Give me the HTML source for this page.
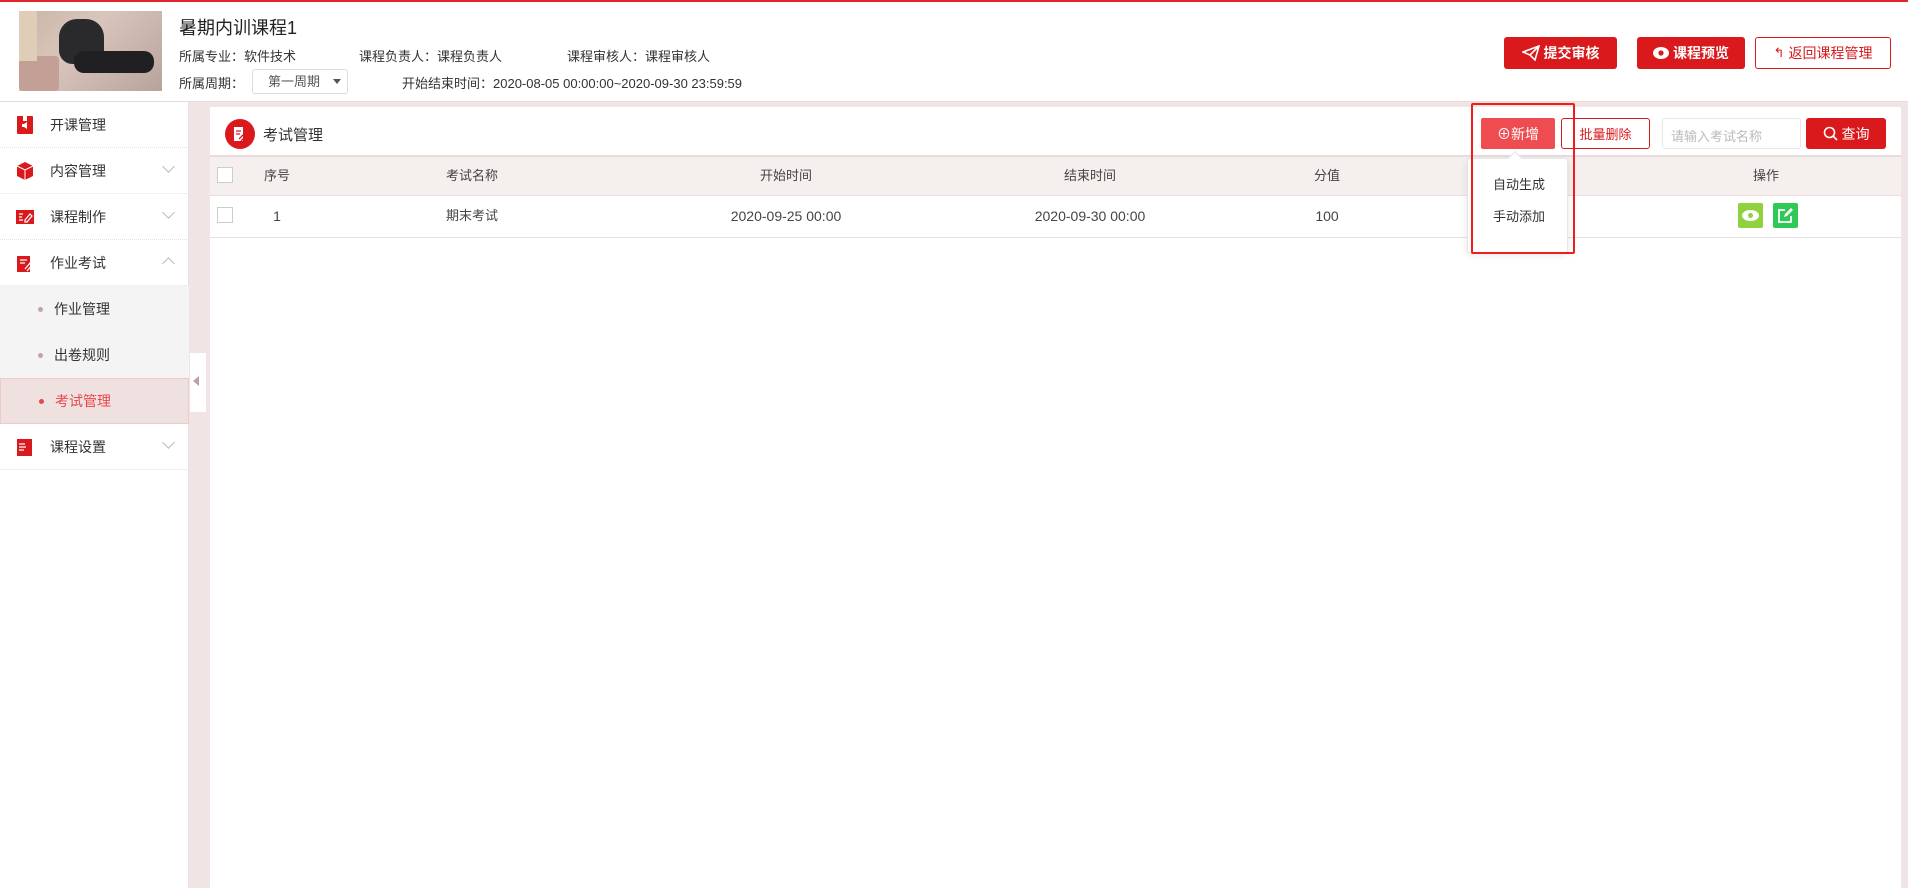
<!DOCTYPE html>
<html><head><meta charset="utf-8">
<style>
*{box-sizing:border-box;margin:0;padding:0}
body{width:1908px;height:888px;overflow:hidden;background:#f0e4e5;font-family:"Liberation Sans","Noto Sans CJK SC",sans-serif;color:#333;position:relative}
.a{position:absolute}
.hdr{left:0;top:0;width:1908px;height:102px;background:#fff;border-top:2px solid #e0262a;border-bottom:1px solid #ead9da}
.btn{position:absolute;height:32px;border-radius:3px;font-size:14px;display:flex;align-items:center;justify-content:center;gap:4px}
.red{background:#d9191c;color:#fff;font-weight:bold}
.side{left:0;top:102px;width:189px;height:786px;background:#fff;border-right:1px solid #eadede}
.it{position:absolute;left:0;width:189px;height:46px;font-size:14px;display:flex;align-items:center;border-bottom:1px dotted #e8e0e0}
.it .ic{position:absolute;left:16px;width:18px;height:18px}
.it span{position:absolute;left:50px}
.chev{position:absolute;left:164px;width:9px;height:9px;border-right:1.3px solid #bbb;border-bottom:1.3px solid #bbb;transform:rotate(45deg);top:14px}
.sub{background:#f4f4f4}
.sub span{left:54px}
.dot{position:absolute;left:38px;width:5px;height:5px;border-radius:50%;background:#c0a6a8}
.panel{left:210px;top:107px;width:1691px;height:781px;background:#fff}
.th{position:absolute;font-size:13px;color:#444;transform:translateX(-50%);line-height:16px;white-space:nowrap}
.cb{position:absolute;width:16px;height:16px;border:1px solid #ccc;background:#fff}
</style></head><body>
<div class="a hdr">
  <div class="a" style="left:19px;top:9px;width:143px;height:80px;background:linear-gradient(135deg,#cbb4a8 0%,#d9c5bb 40%,#b8a39a 100%);overflow:hidden">
    <div class="a" style="left:40px;top:8px;width:45px;height:45px;background:#2a2a2c;border-radius:40% 40% 30% 30%"></div>
    <div class="a" style="left:55px;top:40px;width:80px;height:22px;background:#202022;border-radius:10px"></div>
    <div class="a" style="left:0;top:45px;width:40px;height:35px;background:#c39f96;border-radius:4px"></div>
    <div class="a" style="left:0;top:0;width:18px;height:50px;background:#e0cdb8"></div>
  </div>
  <div class="a" style="left:179px;top:12px;font-size:18px;color:#222">暑期内训课程1</div>
  <div class="a" style="left:179px;top:44px;font-size:13px;color:#333">所属专业：软件技术</div>
  <div class="a" style="left:359px;top:44px;font-size:13px;color:#333">课程负责人：课程负责人</div>
  <div class="a" style="left:567px;top:44px;font-size:13px;color:#333">课程审核人：课程审核人</div>
  <div class="a" style="left:179px;top:71px;font-size:13px;color:#333">所属周期：</div>
  <div class="a" style="left:252px;top:67px;width:96px;height:25px;border:1px solid #ddd;border-radius:3px;font-size:13px;line-height:23px;color:#555;padding-left:15px">第一周期<span class="a" style="left:80px;top:9px;border:4px solid transparent;border-top:5px solid #555"></span></div>
  <div class="a" style="left:402px;top:71px;font-size:13px;color:#333">开始结束时间：2020-08-05 00:00:00~2020-09-30 23:59:59</div>
  <div class="btn red" style="left:1504px;top:35px;width:113px"><svg width="18" height="16" viewBox="0 0 18 16"><path d="M1 7L17 1 13 15 8 10 1 7ZM8 10L17 1" fill="none" stroke="#fff" stroke-width="1.6"/></svg>提交审核</div>
  <div class="btn red" style="left:1637px;top:35px;width:108px"><svg width="16" height="12" viewBox="0 0 16 12"><ellipse cx="8" cy="6" rx="8" ry="6" fill="#fff"/><circle cx="8" cy="6" r="2.6" fill="#d9191c"/></svg>课程预览</div>
  <div class="btn" style="left:1755px;top:35px;width:136px;border:1px solid #d9191c;color:#d9191c"><span style="font-size:13px">↰</span>返回课程管理</div>
</div>

<div class="a side">
  <div class="it" style="top:0"><svg class="ic" viewBox="0 0 18 18"><rect x="1" y="0" width="16" height="18" rx="1" fill="#d9191c"/><rect x="7" y="0" width="4" height="5" fill="#fff"/><path d="M6 8h2l3-2v7l-3-2H6z" fill="#fff"/></svg><span>开课管理</span></div>
  <div class="it" style="top:46px"><svg class="ic" viewBox="0 0 18 18"><path d="M9 0L17 4V14L9 18 1 14V4Z" fill="#d9191c"/><path d="M1 4L9 8 17 4M9 8V18" stroke="#fff" stroke-width="1" fill="none"/></svg><span>内容管理</span><i class="chev"></i></div>
  <div class="it" style="top:92px"><svg class="ic" viewBox="0 0 18 18"><rect x="0" y="2" width="18" height="14" fill="#d9191c"/><path d="M3 6h4M3 9h3M3 12h4M9 12l5-6 2 2-5 6h-2z" stroke="#fff" stroke-width="1.2" fill="none"/></svg><span>课程制作</span><i class="chev"></i></div>
  <div class="it" style="top:138px"><svg class="ic" viewBox="0 0 18 18"><path d="M1 2h13v16H1z" fill="#d9191c"/><path d="M4 6h7M4 9h5M9 15l6-7 2 2-6 7" stroke="#fff" stroke-width="1.3" fill="none"/></svg><span>作业考试</span><i class="chev" style="transform:rotate(-135deg);top:19px"></i></div>
  <div class="it sub" style="top:184px;border:none"><i class="dot"></i><span>作业管理</span></div>
  <div class="it sub" style="top:230px;border:none"><i class="dot"></i><span>出卷规则</span></div>
  <div class="it" style="top:276px;background:#f0e1e1;border:1px solid #efcaca;color:#e8474a"><i class="dot" style="background:#e8474a"></i><span style="left:54px">考试管理</span></div>
  <div class="it" style="top:322px"><svg class="ic" viewBox="0 0 18 18"><rect x="1" y="1" width="15" height="17" fill="#d9191c"/><path d="M3 6h6M3 9h7M3 12h5" stroke="#fff" stroke-width="1.2"/></svg><span>课程设置</span><i class="chev"></i></div>
</div>
<div class="a" style="left:190px;top:353px;width:16px;height:59px;background:#fff"><span class="a" style="left:3px;top:23px;border:5px solid transparent;border-right:6px solid #b9a1a3;border-left:0"></span></div>

<div class="a panel">
  <div class="a" style="left:15px;top:12px;width:30px;height:30px;border-radius:50%;background:#d9191c"><svg class="a" style="left:8px;top:7px" width="15" height="16" viewBox="0 0 15 16"><path d="M1 1h9v14H1z" fill="#fff"/><path d="M3 5h5M3 8h4M6 13l6-6 2 2-6 6" stroke="#d9191c" stroke-width="1.3" fill="none"/></svg></div>
  <div class="a" style="left:53px;top:17px;font-size:15px;color:#333">考试管理</div>
  <div class="btn" style="left:1271px;top:11px;width:74px;height:31px;background:#ee4c51;color:#fff;border-radius:2px">⊕新增</div>
  <div class="btn" style="left:1351px;top:11px;width:89px;height:31px;border:1px solid #d9191c;color:#d9191c;font-size:13px">批量删除</div>
  <div class="a" style="left:1452px;top:11px;width:139px;height:31px;border:1px solid #e8e8e8;border-radius:3px;font-size:13px;color:#bbb;padding:7px 0 0 8px">请输入考试名称</div>
  <div class="btn red" style="left:1596px;top:11px;width:80px;height:31px;font-weight:normal"><svg width="15" height="15" viewBox="0 0 15 15"><circle cx="6.5" cy="6.5" r="5" fill="none" stroke="#fff" stroke-width="1.6"/><path d="M10 10l4 4" stroke="#fff" stroke-width="1.6"/></svg>查询</div>

  <div class="a" style="left:0;top:48px;width:1691px;height:41px;background:#f5efee;border-top:2px solid #e9dcdc;border-bottom:1px solid #ecdede"></div>
  <div class="cb" style="left:7px;top:60px"></div>
  <div class="th" style="left:67px;top:61px">序号</div>
  <div class="th" style="left:262px;top:61px">考试名称</div>
  <div class="th" style="left:576px;top:61px">开始时间</div>
  <div class="th" style="left:880px;top:61px">结束时间</div>
  <div class="th" style="left:1117px;top:61px">分值</div>
  <div class="th" style="left:1556px;top:61px">操作</div>
  <div class="a" style="left:0;top:89px;width:1691px;height:42px;border-bottom:1px solid #ecdede"></div>
  <div class="cb" style="left:7px;top:100px"></div>
  <div class="th" style="left:67px;top:101px;font-size:14px">1</div>
  <div class="th" style="left:262px;top:101px">期末考试</div>
  <div class="th" style="left:576px;top:101px;font-size:14px">2020-09-25 00:00</div>
  <div class="th" style="left:880px;top:101px;font-size:14px">2020-09-30 00:00</div>
  <div class="th" style="left:1117px;top:101px;font-size:14px">100</div>
  <div class="a" style="left:1528px;top:96px;width:25px;height:25px;background:#8fd13f;border-radius:2px"><svg class="a" style="left:4px;top:7px" width="17" height="11" viewBox="0 0 17 11"><ellipse cx="8.5" cy="5.5" rx="8.5" ry="5.5" fill="#fff"/><circle cx="8.5" cy="5.5" r="2.5" fill="#8fd13f"/></svg></div>
  <div class="a" style="left:1563px;top:96px;width:25px;height:25px;background:#2ec957;border-radius:2px"><svg class="a" style="left:5px;top:5px" width="15" height="15" viewBox="0 0 15 15"><path d="M7 2H1v12h12V8" fill="none" stroke="#fff" stroke-width="1.8"/><path d="M6 9l1-3 6-6 2 2-6 6z" fill="#fff"/></svg></div>

  <div class="a" style="left:1257px;top:51px;width:101px;height:95px;background:#fff;border:1px solid #e6e6e6;border-radius:3px;box-shadow:0 2px 8px rgba(0,0,0,.1)"></div>
  <div class="a" style="left:1300px;top:46px;width:10px;height:10px;background:#fff;border-left:1px solid #e6e6e6;border-top:1px solid #e6e6e6;transform:rotate(45deg)"></div>
  <div class="a" style="left:1283px;top:67px;font-size:13px;color:#333">自动生成</div>
  <div class="a" style="left:1283px;top:99px;font-size:13px;color:#333">手动添加</div>
  <div class="a" style="left:1261px;top:-4px;width:104px;height:151px;border:2px solid #f21c1c;border-radius:2px"></div>
</div>
</body></html>
